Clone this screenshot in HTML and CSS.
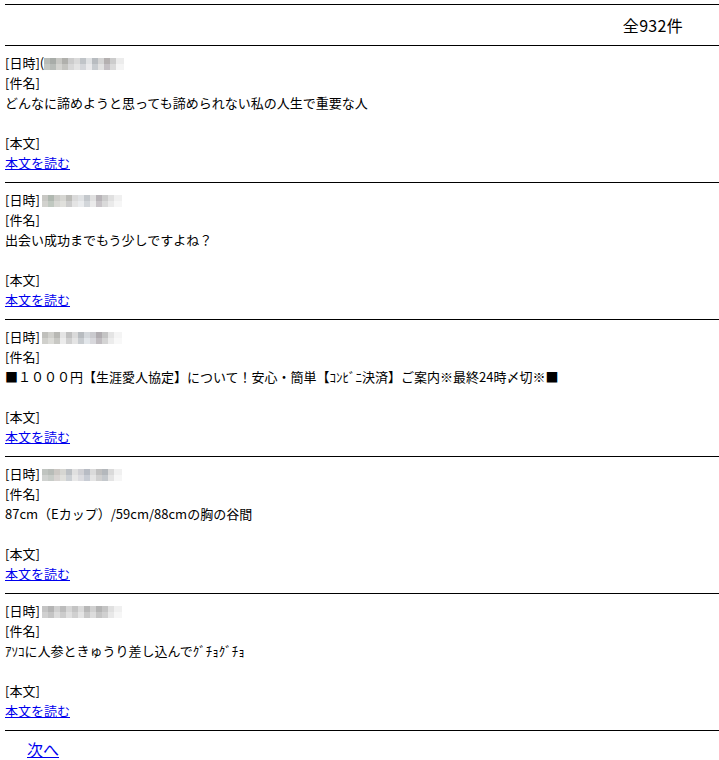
FILE: index.html
```html
<!DOCTYPE html>
<html lang="ja">
<head>
<meta charset="utf-8">
<title>一覧</title>
<link rel="stylesheet" href="styles.css">
</head>
<body>
<div class="page">
  <div class="header"><span class="count">全932件</span></div>

  <div class="item">
    <div class="row">[日時](<span class="mosaic m1"></span></div>
    <div class="row">[件名]</div>
    <div class="row">どんなに諦めようと思っても諦められない私の人生で重要な人</div>
    <div class="row"></div>
    <div class="row">[本文]</div>
    <div class="row"><a href="#">本文を読む</a></div>
  </div>

  <div class="item">
    <div class="row">[日時]<span class="mosaic m2"></span></div>
    <div class="row">[件名]</div>
    <div class="row">出会い成功までもう少しですよね？</div>
    <div class="row"></div>
    <div class="row">[本文]</div>
    <div class="row"><a href="#">本文を読む</a></div>
  </div>

  <div class="item">
    <div class="row">[日時]<span class="mosaic m3"></span></div>
    <div class="row">[件名]</div>
    <div class="row">■１０００円【生涯愛人協定】について！安心・簡単【ｺﾝﾋﾞﾆ決済】ご案内※最終24時〆切※■</div>
    <div class="row"></div>
    <div class="row">[本文]</div>
    <div class="row"><a href="#">本文を読む</a></div>
  </div>

  <div class="item">
    <div class="row">[日時]<span class="mosaic m4"></span></div>
    <div class="row">[件名]</div>
    <div class="row">87cm（Eカップ）/59cm/88cmの胸の谷間</div>
    <div class="row"></div>
    <div class="row">[本文]</div>
    <div class="row"><a href="#">本文を読む</a></div>
  </div>

  <div class="item">
    <div class="row">[日時]<span class="mosaic m5"></span></div>
    <div class="row">[件名]</div>
    <div class="row">ｱｿｺに人参ときゅうり差し込んでｸﾞﾁｮｸﾞﾁｮ</div>
    <div class="row"></div>
    <div class="row">[本文]</div>
    <div class="row"><a href="#">本文を読む</a></div>
  </div>

  <div class="pager"><a href="#">次へ</a></div>
</div>
</body>
</html>
```

FILE: styles.css
```css
html, body {
  margin: 0;
  padding: 0;
  background: #fff;
}

body {
  font-family: "Noto Sans CJK JP", "Noto Sans", sans-serif;
  color: #000;
}

.page {
  padding: 4px 0 0 5px;
}

.header {
  height: 40px;
  border-top: 1px solid #000;
  border-bottom: 1px solid #000;
  display: flex;
  align-items: center;
  justify-content: flex-end;
  padding-right: 36px;
  font-size: 16px;
}

.count {
  line-height: 20px;
  letter-spacing: 0.3px;
}

.item {
  padding: 7px 0 9px 0;
  border-bottom: 1px solid #000;
  font-size: 13px;
}

.row {
  height: 20px;
  line-height: 20px;
  white-space: nowrap;
}

a {
  color: #0000ee;
  text-decoration: underline;
}

.mosaic {
  display: inline-block;
  vertical-align: -2px;
  width: 80px;
  height: 12px;
  margin-left: 2px;
  background-repeat: no-repeat;
  background-size: 100% 6px, 100% 6px;
  background-position: 0 0, 0 6px;
}

.m1 {
  margin-left: 0;
  background-image:
    linear-gradient(to right, #b8bcb8 0 6px, #a8aca8 6px 12px, #c8c8c4 12px 18px, #b0b0ac 18px 24px, #cccccc 24px 30px, #dadada 30px 36px, #c0c4c8 36px 42px, #e0e2e4 42px 48px, #b8bcc0 48px 54px, #d4d4d4 54px 60px, #b4b0b0 60px 66px, #cccccc 66px 72px, #ececec 72px 80px),
    linear-gradient(to right, #c4c8c4 0 6px, #b8bcb8 6px 12px, #d4d4d0 12px 18px, #c4c4c0 18px 24px, #d8d8d8 24px 30px, #e4e4e4 30px 36px, #d4d6da 36px 42px, #eaeaec 42px 48px, #c8ccd0 48px 54px, #e2e2e2 54px 60px, #c4c0c4 60px 66px, #dadada 66px 72px, #f4f4f4 72px 80px);
}

.m2 {
  background-image:
    linear-gradient(to right, #c8c8c4 0 6px, #b0b8b0 6px 12px, #ccccc8 12px 18px, #d6d6d2 18px 24px, #bcbcb8 24px 30px, #dadada 30px 36px, #e0e2e4 36px 42px, #c4c8cc 42px 48px, #e0e0e0 48px 54px, #b8b4b8 54px 60px, #cccccc 60px 66px, #e0e0e0 66px 72px, #f0f0f0 72px 80px),
    linear-gradient(to right, #d2d2ce 0 6px, #c0c8c0 6px 12px, #d8d8d4 12px 18px, #e0e0dc 18px 24px, #cccccc 24px 30px, #e4e4e4 30px 36px, #eaecee 36px 42px, #d2d6da 42px 48px, #eaeaea 48px 54px, #c8c4c8 54px 60px, #dadada 60px 66px, #eaeaea 66px 72px, #f6f6f6 72px 80px);
}

.m3 {
  background-image:
    linear-gradient(to right, #c0c0bc 0 6px, #d0d0cc 6px 12px, #b8b8b4 12px 18px, #e4e4e4 18px 24px, #c0c0c0 24px 30px, #dadada 30px 36px, #b8bcc0 36px 42px, #d4d8dc 42px 48px, #cacace 48px 54px, #b0acb0 54px 60px, #c4c4c4 60px 66px, #e4e4e4 66px 72px, #f4f4f4 72px 80px),
    linear-gradient(to right, #d0d0cc 0 6px, #dcdcd8 6px 12px, #c8c8c4 12px 18px, #ececec 18px 24px, #d0d0d0 24px 30px, #e4e4e4 30px 36px, #c8ccd0 36px 42px, #e2e6ea 42px 48px, #d8d8dc 48px 54px, #c0bcc0 54px 60px, #d4d4d4 60px 66px, #ececec 66px 72px, #f8f8f8 72px 80px);
}

.m4 {
  background-image:
    linear-gradient(to right, #c0c4c0 0 6px, #b8bcb8 6px 12px, #ccc8c4 12px 18px, #d6d6d2 18px 24px, #bcc0c4 24px 30px, #e0e0e0 30px 36px, #d0d0d4 36px 42px, #b8bcc4 42px 48px, #dadada 48px 54px, #c0c0c0 54px 60px, #b4b8bc 60px 66px, #dadada 66px 72px, #f0f0f0 72px 80px),
    linear-gradient(to right, #d0d2d0 0 6px, #c8ccc8 6px 12px, #d8d4d2 12px 18px, #e0e0dc 18px 24px, #ccd0d4 24px 30px, #e8e8e8 30px 36px, #dcdce0 36px 42px, #c8ccd4 42px 48px, #e4e4e4 48px 54px, #d0d0d0 54px 60px, #c4c8cc 60px 66px, #e4e4e4 66px 72px, #f6f6f6 72px 80px);
}

.m5 {
  background-image:
    linear-gradient(to right, #c4c4c4 0 6px, #b4b4b4 6px 12px, #d0d0d0 12px 18px, #bcbcbc 18px 24px, #d6d6d6 24px 30px, #c4c4c4 30px 36px, #dadada 36px 42px, #b8b8b8 42px 48px, #d0d0d0 48px 54px, #b4b4b4 54px 60px, #c4c4c4 60px 66px, #e0e0e0 66px 72px, #f0f0f0 72px 80px),
    linear-gradient(to right, #d0d0d0 0 6px, #c4c4c4 6px 12px, #dcdcdc 12px 18px, #cccccc 18px 24px, #e0e0e0 24px 30px, #d0d0d0 30px 36px, #e4e4e4 36px 42px, #c8c8c8 42px 48px, #dcdcdc 48px 54px, #c4c4c4 54px 60px, #d0d0d0 60px 66px, #e8e8e8 66px 72px, #f6f6f6 72px 80px);
}

.pager {
  padding: 8px 0 0 22px;
  font-size: 16px;
  line-height: 20px;
}
```
